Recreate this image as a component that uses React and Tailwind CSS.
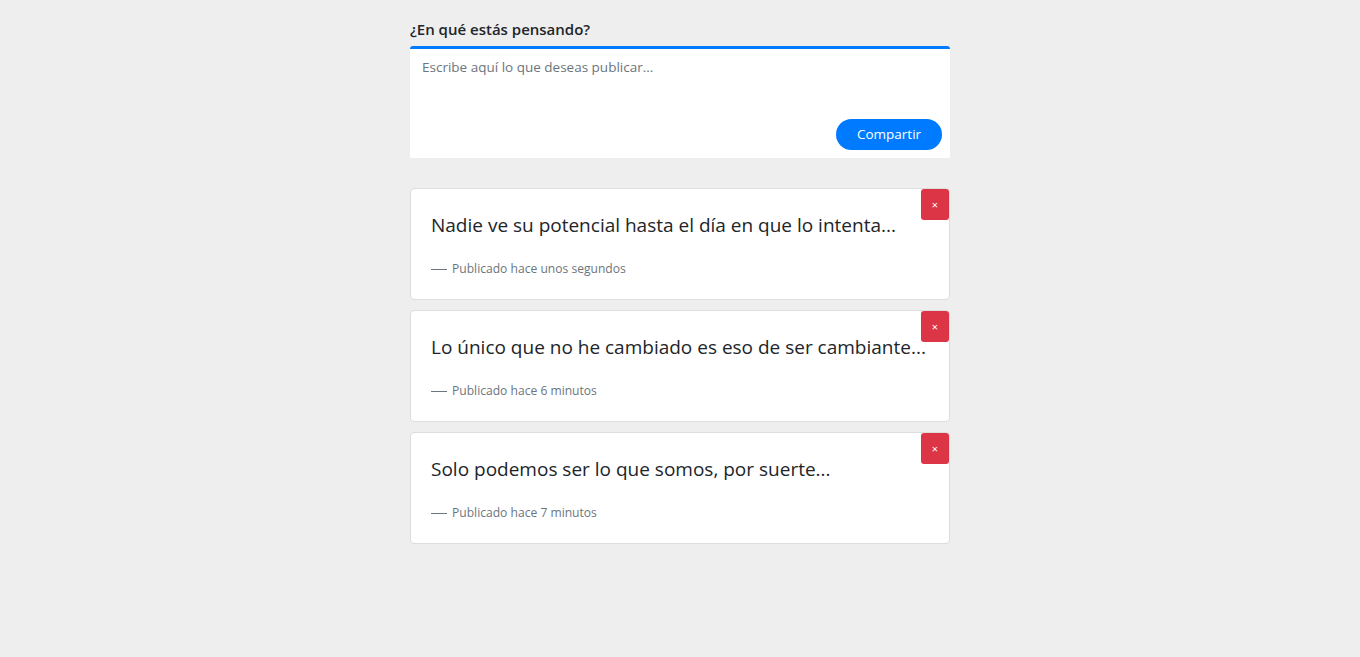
import { useState } from 'react'

const POSTS = [
  { id: 1, text: 'Nadie ve su potencial hasta el día en que lo intenta...', time: 'hace unos segundos' },
  { id: 2, text: 'Lo único que no he cambiado es eso de ser cambiante...', time: 'hace 6 minutos' },
  { id: 3, text: 'Solo podemos ser lo que somos, por suerte...', time: 'hace 7 minutos' },
]

export default function App() {
  const [posts, setPosts] = useState(POSTS)
  const [draft, setDraft] = useState('')

  return (
    <div className="min-h-screen bg-[#eeeeee] font-['Open_Sans',sans-serif] text-[#212529]">
      <div className="w-[540px] mx-auto pt-[17px]">
        {/* Composer */}
        <label className="block text-[15px] font-semibold leading-[24px] mb-[5px] text-[#212529]">
          ¿En qué estás pensando?
        </label>
        <div className="bg-white border-t-[3px] border-[#007bff] rounded-t-[3px] h-[112px] flex flex-col">
          <textarea
            value={draft}
            onChange={e => setDraft(e.target.value)}
            placeholder="Escribe aquí lo que deseas publicar..."
            className="flex-1 resize-none outline-none px-3 pt-[8px] text-[13.5px] leading-[20px] placeholder:text-[#6c757d]"
          />
          <div className="flex justify-end px-2 pb-2">
            <button className="bg-[#007bff] text-white text-[13.5px] rounded-full h-[31px] w-[106px] leading-none">
              Compartir
            </button>
          </div>
        </div>

        {/* Posts */}
        <div className="mt-[30px] flex flex-col gap-[10px]">
          {posts.map(p => (
            <div key={p.id} className="relative bg-white border border-[#dddddd] rounded-[4px] h-[112px] px-5 pt-[21px]">
              <button
                onClick={() => setPosts(posts.filter(x => x.id !== p.id))}
                className="absolute top-0 right-0 w-[28px] h-[31px] bg-[#dc3545] text-white text-[11px] rounded-[3px] flex items-center justify-center leading-none"
              >
                ×
              </button>
              <p className="text-[19px] leading-[30px] text-[#212529] whitespace-nowrap">{p.text}</p>
              <p className="mt-[20px] flex items-center text-[12.1px] leading-[18px] text-[#6c757d]">
                <span className="inline-block w-[16px] h-px bg-[#6c757d] mr-[5px]" />
                Publicado {p.time}
              </p>
            </div>
          ))}
        </div>
      </div>
    </div>
  )
}
